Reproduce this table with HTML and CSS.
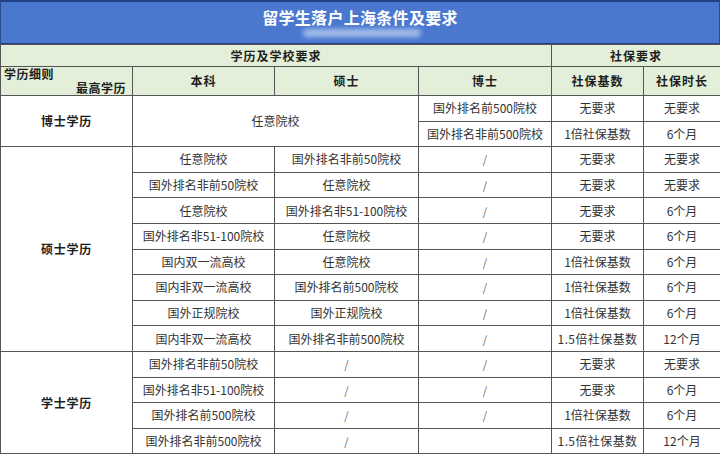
FILE: index.html
```html
<!DOCTYPE html>
<html lang="zh">
<head>
<meta charset="utf-8">
<title>留学生落户上海条件及要求</title>
<link rel="stylesheet" href="styles.css">
</head>
<body>
<div class="page">
  <div class="title">
    <span class="title-text">留学生落户上海条件及要求</span>
    <span class="watermark"></span>
  </div>
  <table class="grid">
    <colgroup>
      <col class="c1"><col class="c2"><col class="c3"><col class="c4"><col class="c5"><col class="c6">
    </colgroup>
    <thead>
      <tr class="h1">
        <th colspan="4">学历及学校要求</th>
        <th colspan="2">社保要求</th>
      </tr>
      <tr class="h2">
        <th class="diag"><div class="diag-in"><span class="d-top">学历细则</span><span class="d-bot">最高学历</span></div></th>
        <th>本科</th>
        <th>硕士</th>
        <th>博士</th>
        <th>社保基数</th>
        <th>社保时长</th>
      </tr>
    </thead>
    <tbody>
      <tr>
        <td rowspan="2" class="sec">博士学历</td>
        <td rowspan="2" colspan="2">任意院校</td>
        <td>国外排名前500院校</td>
        <td>无要求</td>
        <td>无要求</td>
      </tr>
      <tr>
        <td>国外排名非前500院校</td>
        <td>1倍社保基数</td>
        <td>6个月</td>
      </tr>
      <tr>
        <td rowspan="8" class="sec">硕士学历</td>
        <td>任意院校</td><td>国外排名非前50院校</td><td class="sl">/</td><td>无要求</td><td>无要求</td>
      </tr>
      <tr><td>国外排名非前50院校</td><td>任意院校</td><td class="sl">/</td><td>无要求</td><td>无要求</td></tr>
      <tr><td>任意院校</td><td>国外排名非51-100院校</td><td class="sl">/</td><td>无要求</td><td>6个月</td></tr>
      <tr><td>国外排名非51-100院校</td><td>任意院校</td><td class="sl">/</td><td>无要求</td><td>6个月</td></tr>
      <tr><td>国内双一流高校</td><td>任意院校</td><td class="sl">/</td><td>1倍社保基数</td><td>6个月</td></tr>
      <tr><td>国内非双一流高校</td><td>国外排名前500院校</td><td class="sl">/</td><td>1倍社保基数</td><td>6个月</td></tr>
      <tr><td>国外正规院校</td><td>国外正规院校</td><td class="sl">/</td><td>1倍社保基数</td><td>6个月</td></tr>
      <tr><td>国内非双一流高校</td><td>国外排名非前500院校</td><td class="sl">/</td><td class="wide">1.5倍社保基数</td><td>12个月</td></tr>
      <tr>
        <td rowspan="4" class="sec">学士学历</td>
        <td>国外排名非前50院校</td><td class="sl">/</td><td class="sl">/</td><td>无要求</td><td>无要求</td>
      </tr>
      <tr><td>国外排名非51-100院校</td><td class="sl">/</td><td class="sl">/</td><td>无要求</td><td>6个月</td></tr>
      <tr><td>国外排名前500院校</td><td class="sl">/</td><td class="sl">/</td><td>1倍社保基数</td><td>6个月</td></tr>
      <tr><td>国外排名非前500院校</td><td class="sl">/</td><td></td><td class="wide">1.5倍社保基数</td><td>12个月</td></tr>
    </tbody>
  </table>
</div>
</body>
</html>
```
FILE: styles.css
```css
html, body {
  margin: 0;
  padding: 0;
  background: #ffffff;
}
.page {
  width: 720px;
  height: 454px;
  overflow: hidden;
  font-family: "Noto Sans CJK SC", "Noto Sans", sans-serif;
  color: #333333;
}
.title {
  position: relative;
  height: 41px;
  background: #4a78cf;
  border-top: 2px solid #233f86;
  border-left: 1px solid #2b4a92;
  border-right: 1px solid #2b4a92;
  border-bottom: 1px solid #233f86;
  box-sizing: content-box;
  text-align: center;
}
.title-text {
  display: block;
  padding-top: 4px;
  font-size: 16px;
  line-height: 22px;
  font-weight: 700;
  color: #ffffff;
  letter-spacing: 0.3px;
}
.watermark {
  position: absolute;
  left: 302px;
  top: 27px;
  width: 118px;
  height: 8px;
  background: #bcd0f2;
  border-radius: 4px;
  filter: blur(2.5px);
  opacity: 0.8;
}
.grid {
  width: 720px;
  table-layout: fixed;
  border-collapse: collapse;
  font-size: 12px;
}
.c1 { width: 132px; }
.c2 { width: 142px; }
.c3 { width: 144px; }
.c4 { width: 133px; }
.c5 { width: 92px; }
.c6 { width: 77px; }
.grid th, .grid td {
  border: 1px solid #555555;
  padding: 0;
  text-align: center;
  vertical-align: middle;
  line-height: 14px;
  white-space: nowrap;
}
.grid th {
  background: #e3efd9;
  color: #1e1e1e;
  font-weight: 700;
  letter-spacing: 1px;
}
.h1 th {
  height: 21px;
}
.h2 th {
  height: 28px;
}
.grid tbody tr {
  height: 25.6px;
}
.sec {
  font-weight: 700;
  color: #1e1e1e;
  letter-spacing: 0.8px;
}
.sl {
  color: #666666;
  font-size: 11px;
}
.wide {
  letter-spacing: 0.4px;
}
.diag {
  background: linear-gradient(to bottom right, #e3efd9 calc(50% - 0.8px), #555555 50%, #e3efd9 calc(50% + 0.8px));
}
.diag-in {
  display: flex;
  flex-direction: column;
  justify-content: space-between;
  height: 28px;
  padding: 0 6px 0 3px;
  box-sizing: border-box;
  letter-spacing: 0.5px;
}
.d-top {
  align-self: flex-start;
  line-height: 14px;
}
.d-bot {
  align-self: flex-end;
  line-height: 14px;
}
```
